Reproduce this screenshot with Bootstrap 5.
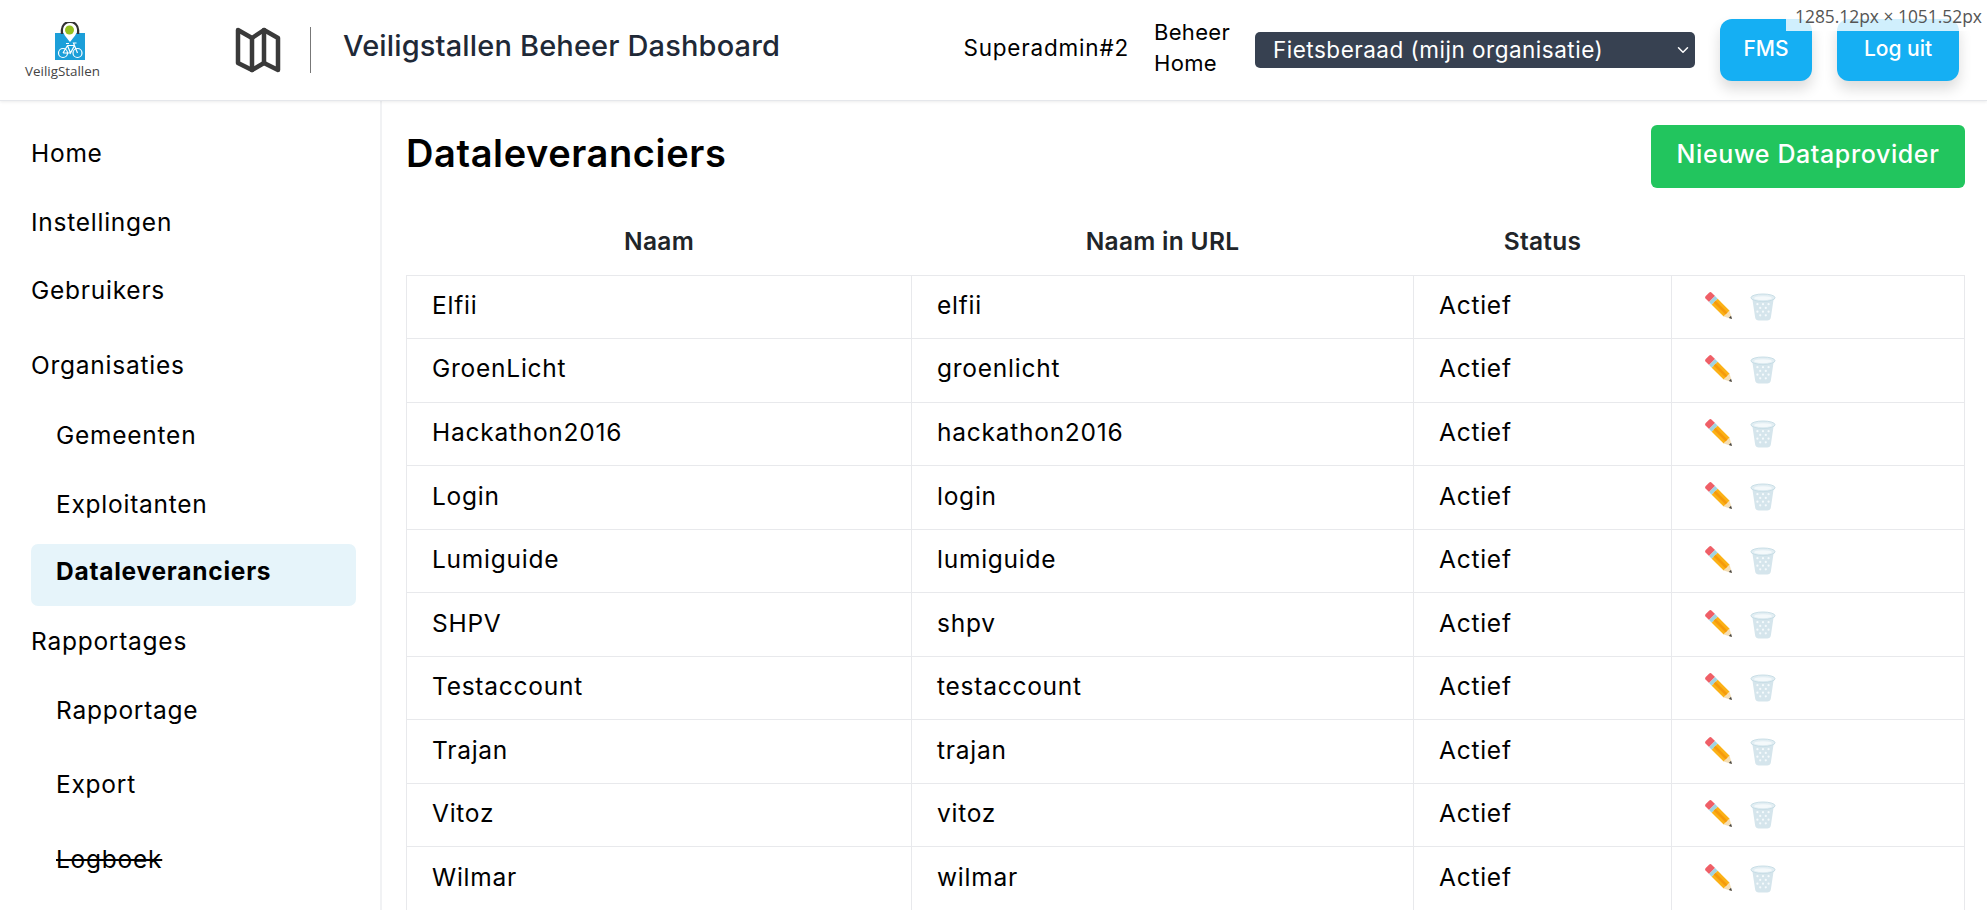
<!doctype html>
<html lang="nl">
<head>
<meta charset="utf-8">
<title>Dataleveranciers</title>
<link href="https://cdn.jsdelivr.net/npm/bootstrap@5.3.0/dist/css/bootstrap.min.css" rel="stylesheet">
<style>
html,body{height:100%;overflow:hidden}
body{font-family:"Inter","Liberation Sans",sans-serif;color:#000;background:#fff}
.topbar{height:101px;border-bottom:1px solid #e5e7eb;box-shadow:0 1px 3px rgba(0,0,0,.08);position:relative;z-index:2;background:#fff;padding-right:28px}
.logo-box{width:235px;padding-left:25px}
.logo-mark{margin-left:30px}
.logo-name{font-family:"Open Sans",sans-serif;font-size:13.4px;color:#444;line-height:1;margin-top:5px}
.map-box{width:75px;line-height:0}
.sep{width:1px;height:46px;background:#777;margin-right:32px}
.app-title{font-size:29px;font-weight:500;color:#1f2937;letter-spacing:.15px;margin-bottom:8px}
.who{font-size:22.5px;letter-spacing:.8px;margin-right:25px;margin-bottom:5px}
.beheer{font-size:22px;letter-spacing:.3px;line-height:31px;margin-right:23px;width:78px;margin-bottom:5px}
.org-select{width:440px;height:36px;background-color:#374151;color:#fff;font-size:22.5px;letter-spacing:.5px;border:0;border-radius:5px;padding:0 0 0 18px;margin-right:25px;--bs-form-select-bg-img:url("data:image/svg+xml,%3csvg xmlns='http://www.w3.org/2000/svg' viewBox='0 0 16 16'%3e%3cpath fill='none' stroke='%23fff' stroke-linecap='round' stroke-linejoin='round' stroke-width='2' d='m2 5 6 6 6-6'/%3e%3c/svg%3e");background-size:12px;background-position:right 6px center}
.top-btn{background:#15aff3;color:#fff;font-size:21px;font-weight:500;height:62px;border:0;border-radius:12px;box-shadow:0 8px 14px rgba(0,0,0,.14);padding:0 0 2px}
.top-btn:hover{background:#15aff3;color:#fff}
.btn-fms{width:92px;margin-right:25px}
.btn-out{width:122px}
.sizebox{position:absolute;top:0;right:0;z-index:5;font-family:"Open Sans",sans-serif;font-size:17.4px;line-height:32px;color:#555;width:201px;height:31px;padding-left:9px;white-space:nowrap;background:rgba(255,255,255,.8)}
.side{width:382px;flex:none;border-right:2px solid #f1f2f4;padding:17px 24px 0 31px}
.side a{display:flex;align-items:center;color:#000;text-decoration:none;font-size:24.5px;letter-spacing:.75px;border-radius:7px}
.side a.sub{padding-left:25px}
.side a.on{background:#e6f4fa;font-weight:700;padding-bottom:7px}
.side a.off{text-decoration:line-through}
.nh62{height:62px}.nh68{height:68px}.nh70{height:70px}.nh58{height:58px}.nh80{height:80px}.nh82{height:82px}
.main-col{padding:24px 23px 0 24px}
.page-h{font-size:38px;font-weight:600;letter-spacing:.6px;margin:0 0 5px}
.new-btn{background:#22c55e;color:#fff;font-size:25px;letter-spacing:.6px;font-weight:500;width:314px;height:63px;border:0;border-radius:6px;padding:0 0 3px}
.new-btn:hover{background:#22c55e;color:#fff}
.data-t{table-layout:fixed;width:1558px;margin:0;font-size:24.5px;letter-spacing:.75px;--bs-table-border-color:#e8e9ec}
.data-t>thead>tr{border:0}
.data-t>thead>tr>th{height:87px;padding:21px 0 0;border:0;text-align:center;font-size:24.5px;letter-spacing:.3px;font-weight:600;vertical-align:middle}
.data-t>tbody>tr>td{height:63.55px;padding:0 25px 3px;border:1.5px solid #e8e9ec;vertical-align:middle;color:#000}
.acts{display:flex;gap:15px;padding:3px 0 0 8px;align-items:center}
.c1{width:505px}.c2{width:502px}.c3{width:258px}.c4{width:293px}
</style>
</head>
<body>
<div class="sizebox">1285.12px × 1051.52px</div>
<header class="topbar d-flex align-items-center">
  <div class="logo-box d-flex flex-column align-items-start">
    <div class="d-flex flex-column align-items-start">
      <svg class="logo-mark" width="30" height="38" viewBox="0 0 30 38"><rect x="0" y="11" width="30" height="27" fill="#1c9fd9"/><path d="M7 12V8a8 8 0 0 1 16 0v4" fill="none" stroke="#333" stroke-width="2.500"/><path d="M15 20c-4-5-7-8-7-12a7 7 0 0 1 14 0c0 4-3 7-7 12z" fill="#fff"/><circle cx="14.500" cy="8" r="4.500" fill="#95c11f"/><g fill="none" stroke="#fff" stroke-width="1.200"><circle cx="8" cy="31" r="4.500"/><circle cx="22.500" cy="31" r="4.500"/><path d="M8 31l4.500-7.500h7L22.500 31M12.500 23.500l3 7.500 4-7.500M11 21.500h3M19.500 23.500l-1-2.500h3M8 31h7.500"/></g></svg>
      <div class="logo-name">VeiligStallen</div>
    </div>
  </div>
  <div class="map-box"><svg width="46" height="46" viewBox="0 0 46 46" fill="none" stroke="#3a3a3a" stroke-width="4.500" stroke-linejoin="round" stroke-linecap="round"><path d="M3 3l14 8L29 3l14 8v32l-14-7-12 7-14-7z"/><path d="M17 11v32M29 3v33"/></svg></div>
  <div class="sep"></div>
  <div class="app-title">Veiligstallen Beheer Dashboard</div>
  <div class="ms-auto d-flex align-items-center">
    <div class="who">Superadmin#2</div>
    <div class="beheer">Beheer Home</div>
    <select class="form-select org-select"><option>Fietsberaad (mijn organisatie)</option></select>
    <button class="btn top-btn btn-fms">FMS</button>
    <button class="btn top-btn btn-out">Log uit</button>
  </div>
</header>
<div class="d-flex">
  <nav class="side">
    <a href="#" class="nh70">Home</a>
    <a href="#" class="nh68">Instellingen</a>
    <a href="#" class="nh68">Gebruikers</a>
    <a href="#" class="nh82">Organisaties</a>
    <a href="#" class="sub nh58">Gemeenten</a>
    <a href="#" class="sub nh80">Exploitanten</a>
    <a href="#" class="sub on nh62">Dataleveranciers</a>
    <a href="#" class="nh70">Rapportages</a>
    <a href="#" class="sub nh68">Rapportage</a>
    <a href="#" class="sub nh80">Export</a>
    <a href="#" class="sub off nh70">Logboek</a>
  </nav>
  <main class="main-col flex-grow-1">
    <div class="d-flex justify-content-between align-items-center">
      <h1 class="page-h">Dataleveranciers</h1>
      <button class="btn new-btn">Nieuwe Dataprovider</button>
    </div>
    <table class="table table-bordered data-t">
      <colgroup><col class="c1"><col class="c2"><col class="c3"><col class="c4"></colgroup>
      <thead><tr><th>Naam</th><th>Naam in URL</th><th>Status</th><th></th></tr></thead>
      <tbody id="rows"></tbody>
    </table>
  </main>
</div>
<svg width="0" height="0" class="position-absolute">
  <defs>
    <symbol id="pencil" viewBox="0 0 32 32">
      <g transform="rotate(45 16 16)">
        <path d="M-1 11.500h5v9h-5a2 2 0 0 1-2-2v-5a2 2 0 0 1 2-2z" fill="#ef5f67"/>
        <rect x="4" y="11.500" width="4" height="9" fill="#9fd4e3"/>
        <rect x="8" y="11.500" width="18" height="9" fill="#fbb116"/>
        <rect x="8" y="14.500" width="18" height="3" fill="#f59a0c"/>
        <path d="M26 11.500l8 4.500-8 4.500z" fill="#f5deb3"/>
        <path d="M31 14.300l3 1.700-3 1.700z" fill="#444"/>
      </g>
    </symbol>
    <symbol id="bin" viewBox="0 0 28 30">
      <path d="M2.500 6l3 20c.3 2.500 2 3.500 4 3.500h9c2 0 3.700-1 4-3.500l3-20z" fill="#d5e5ec"/>
      <ellipse cx="14" cy="5" rx="13" ry="4" fill="#e2eef3" stroke="#c5dbe4"/>
      <ellipse cx="14" cy="5.500" rx="9.500" ry="2" fill="#f4f9fb"/>
      <g fill="#f5fafc"><circle cx="8" cy="12" r="1.200"/><circle cx="14" cy="12" r="1.200"/><circle cx="20" cy="12" r="1.200"/><circle cx="11" cy="16" r="1.200"/><circle cx="17" cy="16" r="1.200"/><circle cx="8" cy="20" r="1.200"/><circle cx="14" cy="20" r="1.200"/><circle cx="20" cy="20" r="1.200"/><circle cx="11" cy="24" r="1.200"/><circle cx="17" cy="24" r="1.200"/></g>
    </symbol>
  </defs>
</svg>
<script>
var d=[['Elfii','elfii'],['GroenLicht','groenlicht'],['Hackathon2016','hackathon2016'],['Login','login'],['Lumiguide','lumiguide'],['SHPV','shpv'],['Testaccount','testaccount'],['Trajan','trajan'],['Vitoz','vitoz'],['Wilmar','wilmar']];
document.getElementById('rows').innerHTML=d.map(function(r){return '<tr><td>'+r[0]+'</td><td>'+r[1]+'</td><td>Actief</td><td><div class="acts"><svg width="30" height="30"><use href="#pencil"/></svg><svg width="26" height="28"><use href="#bin"/></svg></div></td></tr>';}).join('');
</script>
<script src="https://cdn.jsdelivr.net/npm/bootstrap@5.3.0/dist/js/bootstrap.bundle.min.js"></script>
</body>
</html>
